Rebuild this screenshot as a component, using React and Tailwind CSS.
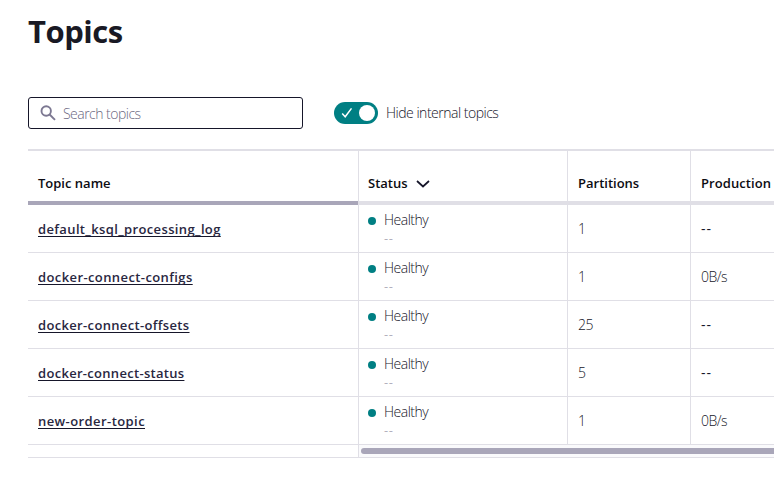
const topics = [
  { name: 'default_ksql_processing_log', partitions: '1', production: '--', tracking: 'tracking-[0.36px]' },
  { name: 'docker-connect-configs', partitions: '1', production: '0B/s', tracking: 'tracking-[0.4px]' },
  { name: 'docker-connect-offsets', partitions: '25', production: '--', tracking: 'tracking-[0.34px]' },
  { name: 'docker-connect-status', partitions: '5', production: '--', tracking: 'tracking-[0.3px]' },
  { name: 'new-order-topic', partitions: '1', production: '0B/s', tracking: 'tracking-[0.42px]' },
];

const columns = 'grid grid-cols-[330px_209px_123px_1fr]';

function SearchBox() {
  return (
    <div className="flex h-8 w-[275px] items-center rounded-[3px] border border-[#16162a] pl-[11px]">
      <svg className="size-4 shrink-0" viewBox="0 0 16 16" fill="none" stroke="#7c7892" strokeWidth="1.9">
        <circle cx="6.2" cy="6" r="4.7" />
        <path d="M9.6 9.5 15 14.9" />
      </svg>
      <span className="ml-[7px] pt-0.5 text-[14px] leading-5 font-light tracking-[-0.52px] text-[#6a6780]"><span>Search topics</span></span>
    </div>
  );
}

function Toggle() {
  return (
    <div className="flex h-[22px] w-11 items-center justify-between rounded-full bg-[#007f83] pr-[3px] pl-[7px]">
      <svg className="h-3 w-3" viewBox="0 0 12 12" fill="none" stroke="#fff" strokeWidth="1.5">
        <path d="M1.2 6.6 4.2 9.8 10.5 1.4" />
      </svg>
      <span className="size-4 rounded-full bg-white" />
    </div>
  );
}

export default function App() {
  return (
    <main className="h-[483px] w-[774px] overflow-hidden bg-white pl-7 font-['Open_Sans','Noto_Sans',sans-serif] text-[#16162a]">
      <h1 className="pt-[11px] text-[31px] leading-10 font-bold tracking-[-0.5px] text-[#191924]"><span>Topics</span></h1>
      <div className="mt-[46px] flex items-center">
        <SearchBox />
        <div className="ml-[31px] flex items-center gap-2">
          <Toggle />
          <span className="text-[14px] leading-5 font-light tracking-[-0.49px]">Hide internal topics</span>
        </div>
      </div>

      <div className="mt-5 border-t-2 border-[#e0dfe6]">
        <div className={`${columns} h-[54px] text-[13px] leading-5 font-semibold text-[#0c0c12]`}>
          <div className="border-b-4 border-[#a9a6b9] pt-[22px] pl-2.5"><span>Topic name</span></div>
          <div className="flex border-b-4 border-l border-[#e0dfe6] pt-[22px] pl-[9px]">
            <span>Status</span>
            <svg className="mt-[7px] ml-2 h-2 w-[14px]" viewBox="0 0 14 8" fill="none" stroke="#16162a" strokeWidth="1.7">
              <path d="M1 1 7 6.5 13 1" />
            </svg>
          </div>
          <div className="border-b-4 border-l border-[#e0dfe6] pt-[22px] pl-2.5"><span>Partitions</span></div>
          <div className="border-b-4 border-l border-[#e0dfe6] pt-[22px] pl-2.5"><span className="tracking-[0.08px]">Production</span></div>
        </div>

        {topics.map((t) => (
          <div key={t.name} className={`${columns} h-12 border-b border-[#e0dfe6] text-[14px] leading-5 font-light`}>
            <div className="flex items-center pt-px pl-2.5">
              <a className={`text-[13px] leading-5 font-semibold text-[#29273f] underline decoration-[#16162a] decoration-1 underline-offset-2 [text-decoration-skip-ink:none] ${t.tracking}`}>{t.name}</a>
            </div>
            <div className="flex border-l border-[#e0dfe6] pl-[9px]">
              <span className="mt-3 size-2 rounded-full bg-[#007f83]" />
              <div className="ml-2 pt-[5px]">
                <div className="tracking-[-0.5px]">Healthy</div>
                <div className="text-[13px] leading-4 tracking-[0.5px] text-[#8b889c]">--</div>
              </div>
            </div>
            <div className="flex items-center border-l border-[#e0dfe6] pt-px pl-2.5 tracking-[-0.4px]">{t.partitions}</div>
            <div className="flex items-center border-l border-[#e0dfe6] pt-px pl-2.5">
              <span className={t.production === '--' ? 'font-normal tracking-[0.9px]' : 'tracking-[-0.55px]'}>{t.production}</span>
            </div>
          </div>
        ))}

        <div className="flex h-[13px] border-b border-[#e0dfe6]">
          <div className="w-[330px]" />
          <div className="flex flex-1 items-center border-l border-[#e0dfe6] bg-[#fafafc] pl-0.5">
            <div className="h-1.5 w-full rounded-l-full bg-[#a9a6b9]" />
          </div>
        </div>
      </div>
    </main>
  );
}
